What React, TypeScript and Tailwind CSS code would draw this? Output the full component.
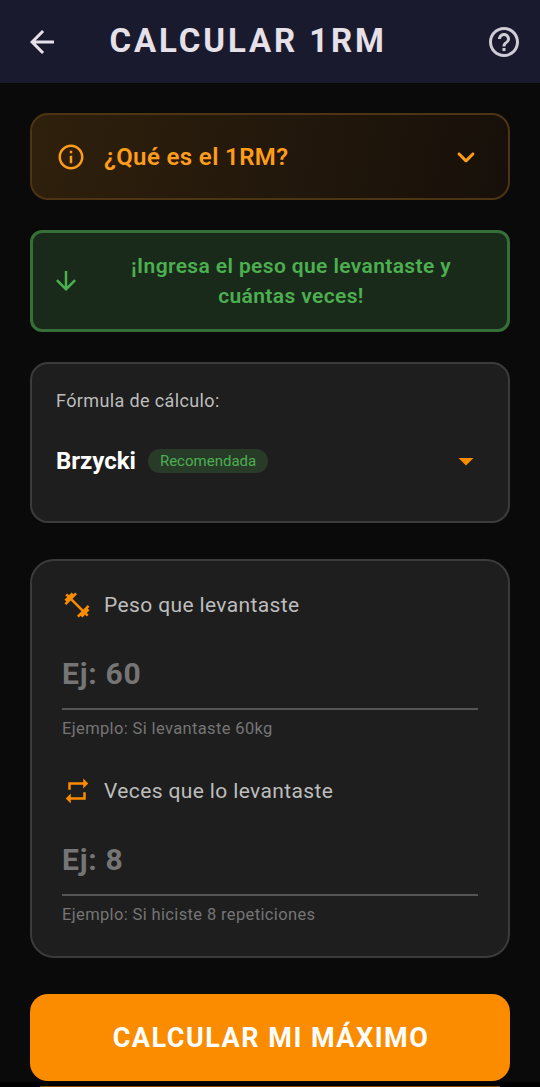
import type { ReactNode } from "react";
import {
  MdArrowBack,
  MdArrowDownward,
  MdArrowDropDown,
  MdFitnessCenter,
  MdHelpOutline,
  MdInfoOutline,
  MdRepeat,
} from "react-icons/md";

function ExpandIcon() {
  return (
    <svg viewBox="0 0 24 24" className="size-9 fill-[#ff9d1a]">
      <path d="M15.88 9.29L12 13.17 8.12 9.29c-.39-.39-1.02-.39-1.41 0-.39.39-.39 1.02 0 1.41l4.59 4.59c.39.39 1.02.39 1.41 0l4.59-4.59c.39-.39.39-1.02 0-1.41-.39-.38-1.03-.39-1.42 0z" />
    </svg>
  );
}

function Header() {
  return (
    <header className="flex h-[83px] items-center bg-[#1a1a2e] text-[#e6e1e9]">
      <button className="ml-6 flex size-9 items-center justify-center">
        <MdArrowBack className="size-9" />
      </button>
      <h1 className="ml-[49.5px] flex-1 pb-0.5 text-[33px] font-bold leading-[40px] tracking-[2.9px] whitespace-nowrap">CALCULAR 1RM</h1>
      <button className="mr-[18px] flex size-9 items-center justify-center">
        <MdHelpOutline className="size-9 text-[#d0ccd6]" />
      </button>
    </header>
  );
}

interface FieldProps {
  icon: ReactNode;
  label: string;
  placeholder: string;
  helper: string;
}

function Field({ icon, label, placeholder, helper }: FieldProps) {
  return (
    <div className="h-[186px]">
      <div className="-ml-[0.5px] flex h-[30px] items-center gap-[12.5px] text-[#fb8c00]">
        {icon}
        <span className="text-[21px] leading-[30px] tracking-[0.375px] text-[#bdbdbd]">{label}</span>
      </div>
      <div className="mt-[33px] h-[57px] border-b-2 border-[#555555] text-[30px] font-bold leading-[42px] tracking-[0.75px] text-[#757575]">{placeholder}</div>
      <p className="mt-[6px] text-[16.5px] leading-[25px] tracking-[0.36px] text-[#757575]">{helper}</p>
    </div>
  );
}

export default function App() {
  return (
    <div className="flex h-[1087px] flex-col overflow-hidden bg-[#0a0a0a] font-['Roboto',sans-serif]">
      <Header />
      <main className="flex flex-col px-[30px] pt-[30px]">
        <section className="flex h-[87px] items-center rounded-[18px] border-2 border-[#4d3514] bg-linear-100 from-[#2f200c] to-[#17100a] pl-[23.5px] pr-6 text-[#ff9d1a]">
          <MdInfoOutline className="size-[30px]" />
          <span className="ml-[18.5px] flex-1 text-[24px] font-semibold leading-[30px] tracking-[0.375px]">¿Qué es el 1RM?</span>
          <ExpandIcon />
        </section>

        <section className="mt-[30px] flex h-[102px] items-center rounded-xl border-[3px] border-[#357038] bg-[#1a2a1a] px-[18px] text-[#4caf50]">
          <MdArrowDownward className="size-[30px]" />
          <p className="ml-3 flex-1 text-center text-[21px] font-semibold leading-[30px] tracking-[0.375px]">
            ¡Ingresa el peso que levantaste y<br />cuántas veces!
          </p>
        </section>

        <section className="mt-[30px] h-[161px] rounded-[18px] border-2 border-[#3b3b3b] bg-[#1e1e1e] px-6 pt-[23px]">
          <p className="text-[18px] leading-[27px] tracking-[0.375px] text-[#bdbdbd]">Fórmula de cálculo:</p>
          <div className="mt-[29px] flex h-9 items-center">
            <span className="text-[24px] font-bold text-white">Brzycki</span>
            <span className="ml-3 flex h-6 items-center rounded-full bg-[#283b29] px-3 text-[15px] text-[#4caf50]">Recomendada</span>
            <MdArrowDropDown className="ml-auto size-9 text-[#fb8c00]" />
          </div>
        </section>

        <section className="mt-9 h-[399px] rounded-3xl border-2 border-[#3b3b3b] bg-[#1e1e1e] px-[30px] pt-[29px]">
          <Field icon={<MdFitnessCenter className="size-[30px]" />} label="Peso que levantaste" placeholder="Ej: 60" helper="Ejemplo: Si levantaste 60kg" />
          <Field icon={<MdRepeat className="size-[30px]" />} label="Veces que lo levantaste" placeholder="Ej: 8" helper="Ejemplo: Si hiciste 8 repeticiones" />
        </section>

        <button className="mt-9 flex h-[87px] items-center justify-center rounded-[18px] bg-[#fb8c00] pl-0.5 pt-0.5 text-[27px] font-bold tracking-[1.5px] text-white">CALCULAR MI MÁXIMO</button>
      </main>
      <div className="mt-auto h-[5px] bg-black px-10 pt-1">
        <div className="h-px bg-[#8a4b00]" />
      </div>
    </div>
  );
}
